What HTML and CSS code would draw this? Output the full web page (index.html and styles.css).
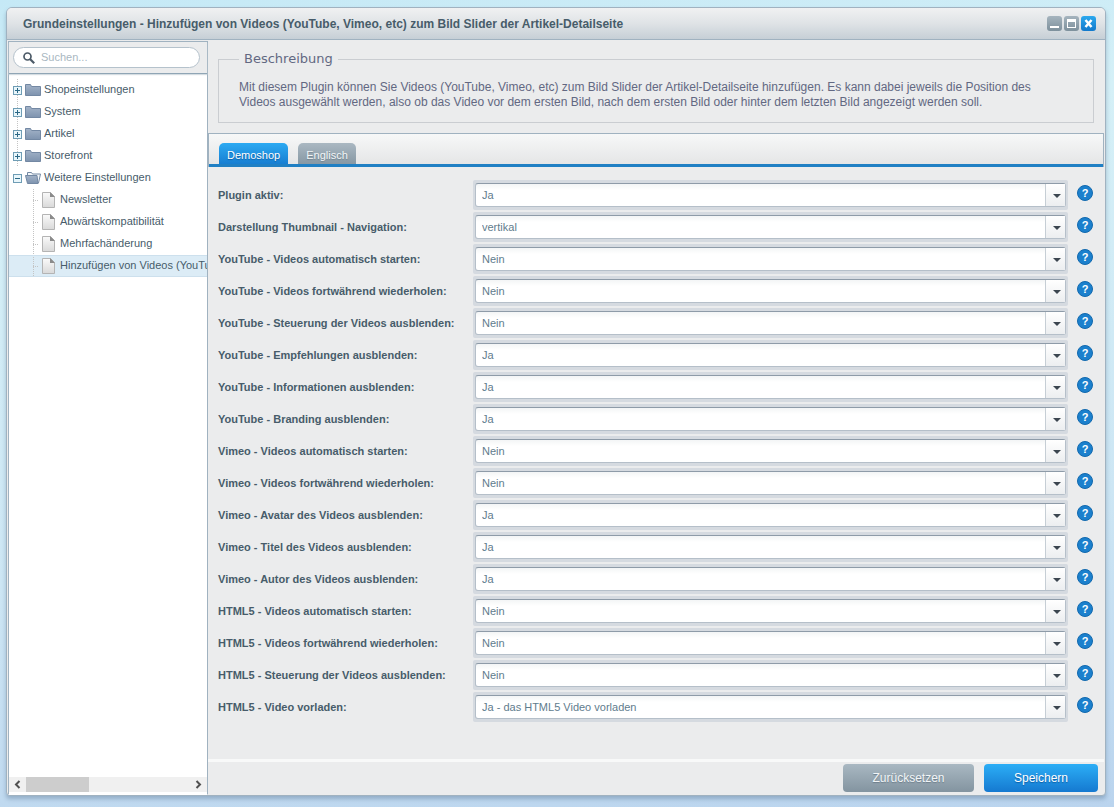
FILE: index.html
```
<!DOCTYPE html>
<html lang="de">
<head>
<meta charset="utf-8">
<title>Grundeinstellungen</title>
<link rel="stylesheet" href="styles.css">
</head>
<body>
<svg class="sprite" aria-hidden="true">
  <defs>
    <linearGradient id="folderFill" x1="0" y1="0" x2="0" y2="1"><stop offset="0" stop-color="#a3b3c8"/><stop offset="1" stop-color="#7e93ae"/></linearGradient>
    <linearGradient id="pageFill" x1="0" y1="0" x2="0" y2="1"><stop offset="0" stop-color="#fafafa"/><stop offset="1" stop-color="#d9d9d9"/></linearGradient>
    <symbol id="plus" viewBox="0 0 9 9"><rect x=".5" y=".5" width="8" height="8" fill="#e9f6fb" stroke="#6f9db5"/><path d="M2 4.500h5M4.500 2v5" stroke="#2b6886"/></symbol>
    <symbol id="minus" viewBox="0 0 9 9"><rect x=".5" y=".5" width="8" height="8" fill="#e9f6fb" stroke="#6f9db5"/><path d="M2 4.500h5" stroke="#2b6886"/></symbol>
    <symbol id="folder" viewBox="0 0 16 16"><path d="M.5 13.500V2.500h5l1 2h9v9z" fill="url(#folderFill)" stroke="#7388a3"/></symbol>
    <symbol id="folder-open" viewBox="0 0 16 16"><path d="M2.500 12V2.500h4l1 1.500h8l-2 9z" fill="#f3f6f9" stroke="#7388a3"/><path d="M.5 5.500H12l1 8H2.500z" fill="url(#folderFill)" stroke="#7388a3"/></symbol>
    <symbol id="page" viewBox="0 0 13 16"><path d="M.5.5h8l4 4v11H.5z" fill="url(#pageFill)" stroke="#b4b4b4"/><path d="M8 0l5 5H8z" fill="#8b8b8b"/></symbol>
  </defs>
</svg>
<div class="window">
  <header class="titlebar">
    <h1 class="title">Grundeinstellungen - Hinzufügen von Videos (YouTube, Vimeo, etc) zum Bild Slider der Artikel-Detailseite</h1>
    <div class="tools">
      <button class="tool" type="button" aria-label="Minimieren"><svg viewBox="0 0 15 15"><path d="M3 11h9" stroke="#fff" stroke-width="2"/></svg></button>
      <button class="tool" type="button" aria-label="Maximieren"><svg viewBox="0 0 15 15"><path d="M3 3h9v9H3zM4 6v5h7V6z" fill="#fff" fill-rule="evenodd"/></svg></button>
      <button class="tool tool-close" type="button" aria-label="Schließen"><svg viewBox="0 0 15 15"><path d="M4.500 4l6 7M10.500 4l-6 7" stroke="#fff" stroke-width="2.500"/></svg></button>
    </div>
  </header>
  <div class="content">
    <aside class="sidebar">
      <div class="search-bar">
        <label class="search">
          <svg class="search-icon" viewBox="0 0 12 12" aria-hidden="true"><circle cx="4.500" cy="4.500" r="3.500" fill="none" stroke="#4c5a67" stroke-width="1.700"/><path d="M7 7l4.200 4.200" stroke="#4c5a67" stroke-width="2.200"/></svg>
          <input class="search-input" type="text" placeholder="Suchen..." aria-label="Suchen">
        </label>
      </div>
      <ul class="tree">
        <li class="node"><svg class="toggle"><use href="#plus"/></svg><svg class="folder"><use href="#folder"/></svg><span>Shopeinstellungen</span></li>
        <li class="node"><svg class="toggle"><use href="#plus"/></svg><svg class="folder"><use href="#folder"/></svg><span>System</span></li>
        <li class="node"><svg class="toggle"><use href="#plus"/></svg><svg class="folder"><use href="#folder"/></svg><span>Artikel</span></li>
        <li class="node"><svg class="toggle"><use href="#plus"/></svg><svg class="folder"><use href="#folder"/></svg><span>Storefront</span></li>
        <li class="node node-last"><svg class="toggle"><use href="#minus"/></svg><svg class="folder"><use href="#folder-open"/></svg><span>Weitere Einstellungen</span></li>
        <li class="node leaf"><i class="branch"></i><svg class="page"><use href="#page"/></svg><span>Newsletter</span></li>
        <li class="node leaf"><i class="branch"></i><svg class="page"><use href="#page"/></svg><span>Abwärtskompatibilität</span></li>
        <li class="node leaf"><i class="branch"></i><svg class="page"><use href="#page"/></svg><span>Mehrfachänderung</span></li>
        <li class="node leaf selected"><i class="branch"></i><svg class="page"><use href="#page"/></svg><span>Hinzufügen von Videos (YouTube</span></li>
      </ul>
      <div class="scrollbar">
        <svg class="scroll-arrow" viewBox="0 0 17 15"><path d="M10.500 4L7 7.500l3.500 3.500" fill="none" stroke="#505050" stroke-width="2"/></svg>
        <div class="scroll-track"><div class="scroll-thumb"></div></div>
        <svg class="scroll-arrow" viewBox="0 0 17 15"><path d="M6.500 4L10 7.500 6.500 11" fill="none" stroke="#505050" stroke-width="2"/></svg>
      </div>
    </aside>
    <main class="main">
      <fieldset class="description">
        <legend>Beschreibung</legend>
        <p>Mit diesem Plugin können Sie Videos (YouTube, Vimeo, etc) zum Bild Slider der Artikel-Detailseite hinzufügen. Es kann dabei jeweils die Position des Videos ausgewählt werden, also ob das Video vor dem ersten Bild, nach dem ersten Bild oder hinter dem letzten Bild angezeigt werden soll.</p>
      </fieldset>
      <div class="tabs" role="tablist">
        <button class="tab tab-active" type="button" role="tab" aria-selected="true">Demoshop</button>
        <button class="tab" type="button" role="tab" aria-selected="false">Englisch</button>
      </div>
      <form class="form">
        <div class="row"><label for="f1">Plugin aktiv:</label><div class="field"><select id="f1"><option>Ja</option></select></div><button class="help" type="button" aria-label="Hilfe">?</button></div>
        <div class="row"><label for="f2">Darstellung Thumbnail - Navigation:</label><div class="field"><select id="f2"><option>vertikal</option></select></div><button class="help" type="button" aria-label="Hilfe">?</button></div>
        <div class="row"><label for="f3">YouTube - Videos automatisch starten:</label><div class="field"><select id="f3"><option>Nein</option></select></div><button class="help" type="button" aria-label="Hilfe">?</button></div>
        <div class="row"><label for="f4">YouTube - Videos fortwährend wiederholen:</label><div class="field"><select id="f4"><option>Nein</option></select></div><button class="help" type="button" aria-label="Hilfe">?</button></div>
        <div class="row"><label for="f5">YouTube - Steuerung der Videos ausblenden:</label><div class="field"><select id="f5"><option>Nein</option></select></div><button class="help" type="button" aria-label="Hilfe">?</button></div>
        <div class="row"><label for="f6">YouTube - Empfehlungen ausblenden:</label><div class="field"><select id="f6"><option>Ja</option></select></div><button class="help" type="button" aria-label="Hilfe">?</button></div>
        <div class="row"><label for="f7">YouTube - Informationen ausblenden:</label><div class="field"><select id="f7"><option>Ja</option></select></div><button class="help" type="button" aria-label="Hilfe">?</button></div>
        <div class="row"><label for="f8">YouTube - Branding ausblenden:</label><div class="field"><select id="f8"><option>Ja</option></select></div><button class="help" type="button" aria-label="Hilfe">?</button></div>
        <div class="row"><label for="f9">Vimeo - Videos automatisch starten:</label><div class="field"><select id="f9"><option>Nein</option></select></div><button class="help" type="button" aria-label="Hilfe">?</button></div>
        <div class="row"><label for="f10">Vimeo - Videos fortwährend wiederholen:</label><div class="field"><select id="f10"><option>Nein</option></select></div><button class="help" type="button" aria-label="Hilfe">?</button></div>
        <div class="row"><label for="f11">Vimeo - Avatar des Videos ausblenden:</label><div class="field"><select id="f11"><option>Ja</option></select></div><button class="help" type="button" aria-label="Hilfe">?</button></div>
        <div class="row"><label for="f12">Vimeo - Titel des Videos ausblenden:</label><div class="field"><select id="f12"><option>Ja</option></select></div><button class="help" type="button" aria-label="Hilfe">?</button></div>
        <div class="row"><label for="f13">Vimeo - Autor des Videos ausblenden:</label><div class="field"><select id="f13"><option>Ja</option></select></div><button class="help" type="button" aria-label="Hilfe">?</button></div>
        <div class="row"><label for="f14">HTML5 - Videos automatisch starten:</label><div class="field"><select id="f14"><option>Nein</option></select></div><button class="help" type="button" aria-label="Hilfe">?</button></div>
        <div class="row"><label for="f15">HTML5 - Videos fortwährend wiederholen:</label><div class="field"><select id="f15"><option>Nein</option></select></div><button class="help" type="button" aria-label="Hilfe">?</button></div>
        <div class="row"><label for="f16">HTML5 - Steuerung der Videos ausblenden:</label><div class="field"><select id="f16"><option>Nein</option></select></div><button class="help" type="button" aria-label="Hilfe">?</button></div>
        <div class="row"><label for="f17">HTML5 - Video vorladen:</label><div class="field"><select id="f17"><option>Ja - das HTML5 Video vorladen</option></select></div><button class="help" type="button" aria-label="Hilfe">?</button></div>
      </form>
      <footer class="footer">
        <button class="btn" type="button">Zurücksetzen</button>
        <button class="btn btn-primary" type="button">Speichern</button>
      </footer>
    </main>
  </div>
</div>
</body>
</html>
```
FILE: styles.css
```
* { box-sizing: border-box; }
body {
  margin: 0;
  min-height: 100vh;
  padding: 7px 8px 11px 6px;
  display: flex;
  font-family: "Liberation Sans", Arial, sans-serif;
  font-size: 11px;
  color: #475c6a;
  background: linear-gradient(175deg, #c5e9f6 0%, #d5f0f7 20%, #cde6f4 65%, #bad4ee 100%);
}
button, input, select { font: inherit; color: inherit; margin: 0; }
svg { display: block; flex: none; }
.sprite { position: absolute; width: 0; height: 0; }

.window {
  flex: 1;
  min-width: 0;
  display: flex;
  flex-direction: column;
  background: #ebeced;
  border: 1px solid #a0b2c0;
  border-radius: 6px 6px 4px 4px;
  box-shadow: 0 3px 4px rgba(80, 110, 140, .4);
}
.titlebar {
  height: 32px;
  display: flex;
  align-items: center;
  justify-content: space-between;
  padding: 0 9px 0 16px;
  border-bottom: 1px solid #a0b2c0;
  border-radius: 5px 5px 0 0;
  background: linear-gradient(#f0f1f2, #dfe3e6 50%, #c6cfd6);
}
.title { margin: 0; font-size: 12px; line-height: 16px; font-weight: bold; white-space: nowrap; }
.tools { display: flex; gap: 2px; }
.tool {
  width: 15px;
  height: 15px;
  padding: 0;
  border: 0;
  border-radius: 3px;
  background: linear-gradient(#a5b4be, #7d909c);
}
.tool svg { width: 15px; height: 15px; }
.tool-close { background: linear-gradient(#2ba8ee, #1279cb); }

.content { flex: 1; display: flex; min-height: 0; padding: 1px 1px 0; }
.sidebar {
  width: 200px;
  flex: none;
  display: flex;
  flex-direction: column;
  border: 1px solid #a0b2c0;
  border-bottom-color: #fff;
  background: #fff;
}
.search-bar { padding: 5px 7px 5px 4px; background: #ebeced; border-bottom: 1px solid #8fa5b5; box-shadow: 0 1px 1px #d5dde2; }
.search {
  height: 21px;
  display: flex;
  align-items: center;
  gap: 6px;
  padding: 0 10px 0 9px;
  border: 1px solid #b5c2cc;
  border-radius: 11px;
  background: #fff;
}
.search-icon { width: 12px; height: 12px; }
.search-input { flex: 1; min-width: 0; padding: 0 0 1px; border: 0; outline: 0; background: none; }
.search-input::placeholder { color: #a9b7c1; }

.tree { flex: 1; margin: 0; padding: 5px 0 0; list-style: none; overflow: hidden; }
.node {
  height: 22px;
  display: flex;
  align-items: center;
  padding: 0 0 0 4px;
  white-space: nowrap;
  background: repeating-linear-gradient(#c4c4c4 0 1px, transparent 1px 2px) 8px 0 / 1px 100% no-repeat;
}
.node span { padding-bottom: 2px; }
.node-last { background: none; }
.toggle { width: 9px; height: 9px; margin-right: 3px; }
.folder { width: 16px; height: 16px; margin-right: 3px; }
.leaf {
  padding-left: 24px;
  background: repeating-linear-gradient(#c4c4c4 0 1px, transparent 1px 2px) 24px 0 / 1px 100% no-repeat;
}
.branch { flex: none; width: 6px; height: 1px; margin-right: 3px; background: repeating-linear-gradient(90deg, #c4c4c4 0 1px, transparent 1px 2px); }
.page { width: 13px; height: 16px; margin-right: 5px; }
.selected { background-color: #dcecf6; box-shadow: inset 0 1px #cde0ed, inset 0 -1px #cde0ed; }
.scrollbar { height: 17px; display: flex; background: #f0f0f0; border-bottom: 2px solid #fff; }
.scroll-arrow { width: 17px; height: 15px; }
.scroll-track { flex: 1; }
.scroll-thumb { width: 63px; height: 15px; background: #cdcdcd; }

.main { flex: 1; min-width: 0; display: flex; flex-direction: column; }
.description {
  min-width: 0;
  margin: 10px 10px 10px 10px;
  padding: 13px 36px 12px 20px;
  border: 1px solid #cacdd1;
  color: #626882;
}
.description legend { padding: 0 5px; font: 13px/16px "DejaVu Sans", sans-serif; }
.description p { margin: 0; font-size: 12px; line-height: 15px; }
.tabs {
  height: 34px;
  display: flex;
  align-items: flex-end;
  gap: 10px;
  padding-left: 10px;
  border: solid #a0b2c0;
  border-width: 1px 1px 0 1px;
  background: linear-gradient(#f7f8f8, #e3e4e5);
  box-shadow: inset 0 -3px #2080c4;
}
.tab {
  height: 24px;
  padding: 2px 8px 0;
  border: 0;
  border-bottom: 3px solid #2080c4;
  border-radius: 5px 5px 0 0;
  color: #f2f5f7;
  background: linear-gradient(#aab8c2, #8798a4);
  text-shadow: 0 1px 1px #71838f;
}
.tab-active { color: #fff; background: linear-gradient(#2caaf2, #177ed2); text-shadow: 0 1px 1px #0d5fa5; }

.form { flex: 1; padding: 13px 11px 0 10px; }
.row { display: grid; grid-template-columns: 246px minmax(0, 1fr) 16px; column-gap: 9px; height: 32px; }
.row label { line-height: 30px; font-weight: bold; white-space: nowrap; }
.field {
  position: relative;
  height: 30px;
  padding: 3px 2px;
  border-radius: 2px;
  background: #d5dae0;
}
.field select {
  display: block;
  width: 100%;
  height: 24px;
  padding: 0 24px 0 6px;
  border: 1px solid #b5bfc9;
  border-top-color: #8e9ba8;
  border-radius: 3px;
  outline: 0;
  appearance: none;
  color: #5f7c8d;
  background: linear-gradient(#f3f5f6, #fff 6px);
}
.field::before {
  content: "";
  position: absolute;
  top: 4px;
  right: 3px;
  width: 19px;
  height: 22px;
  border-left: 1px solid #c6ced5;
  background: linear-gradient(#fff, #eceef0);
  pointer-events: none;
}
.field::after {
  content: "";
  position: absolute;
  top: 14px;
  right: 7px;
  border: solid transparent;
  border-width: 4px 4px 0;
  border-top-color: #3c4650;
  pointer-events: none;
}
.help {
  width: 16px;
  height: 16px;
  margin-top: 5px;
  padding: 0;
  border: 1px solid #1269ae;
  border-radius: 50%;
  background: #1b80cd;
  color: #fff;
  font-size: 11px;
  line-height: 14px;
  font-weight: bold;
  text-align: center;
}
.footer {
  height: 36px;
  display: flex;
  justify-content: flex-end;
  gap: 10px;
  padding: 2px 6px 0 0;
  border-top: 3px solid #f8f9f9;
}
.btn {
  min-width: 131px;
  height: 28px;
  border: 0;
  border-radius: 4px;
  font-size: 12px;
  color: #f2f5f7;
  background: linear-gradient(#a9b8c2, #8394a0);
  text-shadow: 0 1px 1px #6d7e8a;
}
.btn-primary { min-width: 114px; color: #fff; background: linear-gradient(#2caef6, #1579d0); text-shadow: 0 1px 1px #0d5fa5; }
```
